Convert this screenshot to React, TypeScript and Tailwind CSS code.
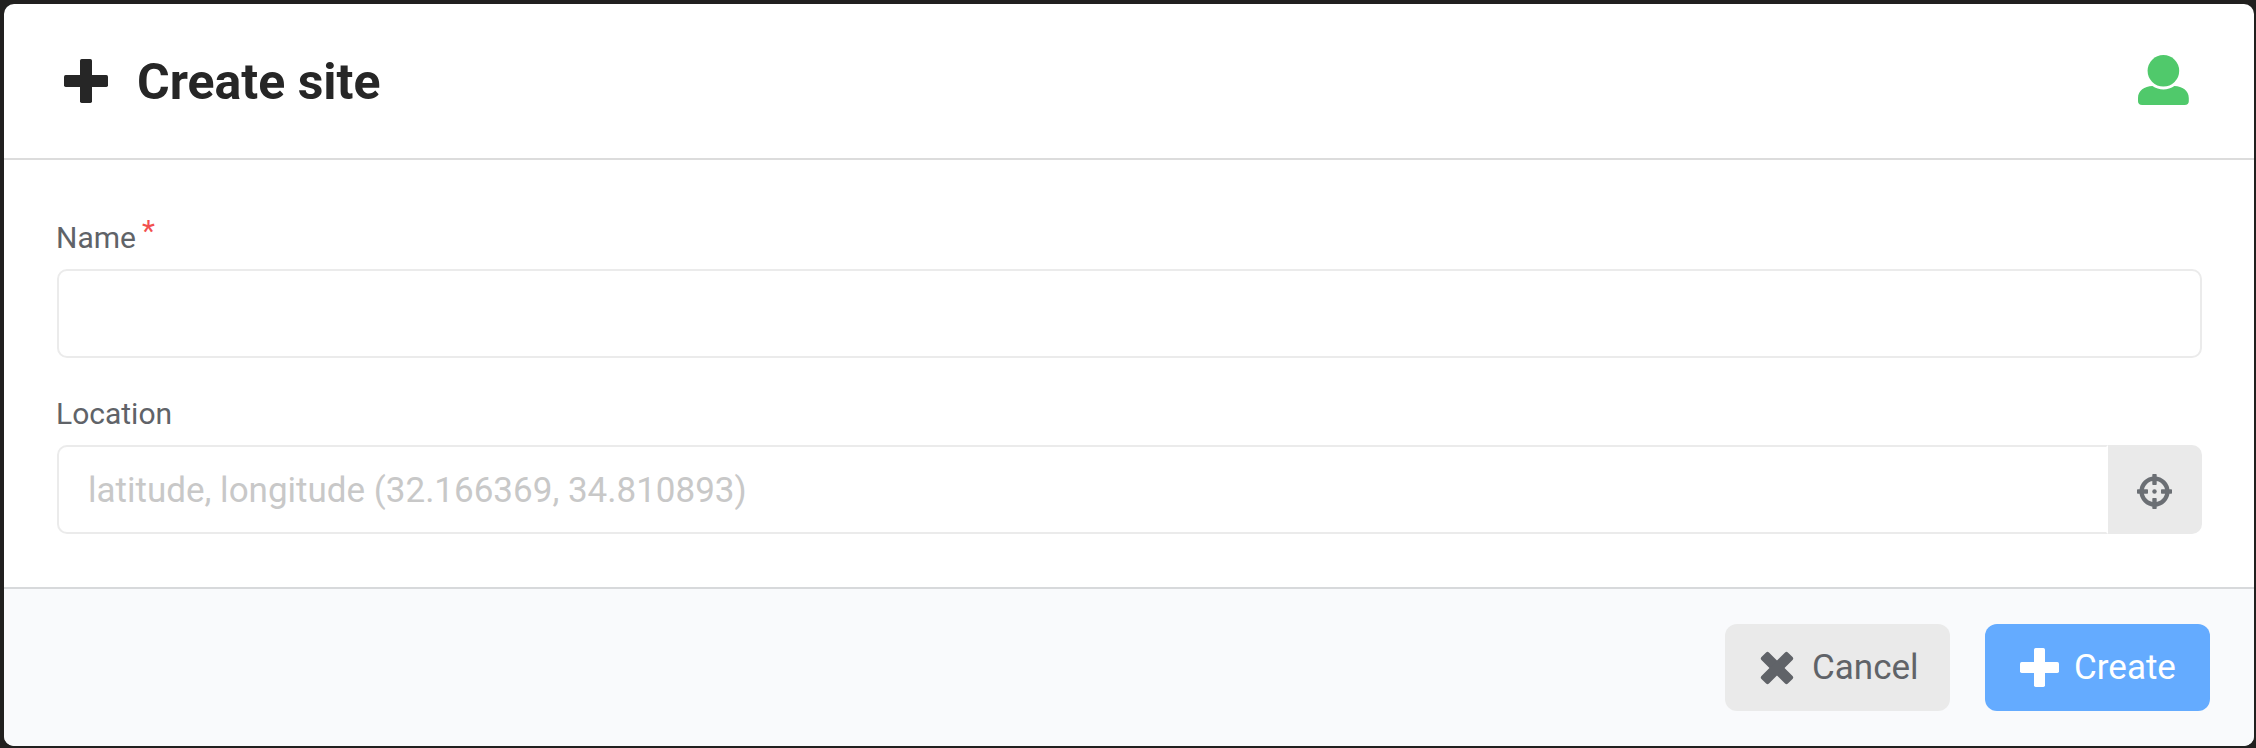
import React from "react";

function PlusIcon({ size, bar, className }: { size: number; bar: number; className?: string }) {
  const start = (size - bar) / 2;
  return (
    <svg width={size} height={size} viewBox={`0 0 ${size} ${size}`} fill="currentColor" className={className} aria-hidden="true">
      <rect x={start} y="0" width={bar} height={size} rx="1.7" />
      <rect x="0" y={start} width={size} height={bar} rx="1.7" />
    </svg>
  );
}

function UserIcon() {
  return (
    <svg width="51" height="52" viewBox="0 0 51 52" className="text-[#50c96b]" fill="currentColor" aria-hidden="true">
      <circle cx="25.4" cy="15.8" r="15.8" />
      <path d="M14.4 31.1C6.5 31.6 0 35.5 0 43v3.3Q0 50 4.2 50h42.4q4.2 0 4.2-3.7V43c0-7.5-6.5-11.4-14.4-11.9C30 35.6 20.8 35.6 14.4 31.1z" />
    </svg>
  );
}

function CrosshairIcon() {
  return (
    <svg width="35" height="35" viewBox="0 0 35 35" fill="currentColor" className="text-[#6b6f74]" aria-hidden="true">
      <circle cx="17.5" cy="17.5" r="12.9" fill="none" stroke="currentColor" strokeWidth="4.3" />
      <circle cx="17.5" cy="17.5" r="2.2" />
      <rect x="15.3" y="0" width="4.4" height="11" rx="0.8" />
      <rect x="15.3" y="24" width="4.4" height="11" rx="0.8" />
      <rect x="0" y="15.3" width="11" height="4.4" rx="0.8" />
      <rect x="24" y="15.3" width="11" height="4.4" rx="0.8" />
    </svg>
  );
}

function CloseIcon() {
  return (
    <svg width="34" height="34" viewBox="0 0 34 34" fill="currentColor" aria-hidden="true">
      <g transform="rotate(45 17 17)">
        <rect x="-1.7" y="11.7" width="37.4" height="10.6" rx="2" />
        <rect x="11.7" y="-1.7" width="10.6" height="37.4" rx="2" />
      </g>
    </svg>
  );
}

export default function App() {
  return (
    <div className="h-[748px] w-[2256px] bg-[#21201f] pt-1 pr-0.5 pb-0.5 pl-1 font-[Roboto,sans-serif]">
      <div className="flex h-full flex-col overflow-hidden rounded-[10px] bg-white">
        <header className="flex h-[156px] shrink-0 items-center border-b-2 border-[#dcdcdc] pr-[65px] pl-[60px] text-[#262626]">
          <PlusIcon size={44} bar={12} />
          <h1 className="ml-[29px] flex-1 pt-0.5 text-[50px] leading-[60px] font-bold">Create site</h1>
          <UserIcon />
        </header>

        <main className="h-[427px] shrink-0 pr-[52px] pl-[53px] text-[#606368]">
          <div className="pt-[58px]">
            <label className="-ml-px flex h-[51px] text-[30px] leading-[40px]">
              Name
              <span className="relative -top-[7px] ml-[6px] text-[#f2504f]">*</span>
            </label>
            <input className="block h-[89px] w-full rounded-[10px] border-2 border-[#ebebeb] bg-white px-[30px] text-[35px] outline-none" />
          </div>
          <div className="pt-[36px]">
            <label className="-ml-px block h-[51px] text-[30px] leading-[40px]">Location</label>
            <div className="flex h-[89px]">
              <input
                className="min-w-0 flex-1 rounded-l-[10px] border-2 border-[#ebebeb] border-r-transparent bg-white pt-[4px] pr-[30px] pl-[29px] text-[35px] outline-none placeholder:text-[#c8c8c8]"
                placeholder="latitude, longitude (32.166369, 34.810893)"
              />
              <button className="flex w-[94px] items-center justify-center rounded-r-[10px] bg-[#eaeaea] pt-1 pr-px" aria-label="Locate">
                <CrosshairIcon />
              </button>
            </div>
          </div>
        </main>

        <footer className="flex flex-1 items-start justify-end gap-[35px] border-t-2 border-[#d7d9db] bg-[#f9fafc] pt-[35px] pr-[44px]">
          <button className="flex h-[87px] w-[225px] items-center rounded-[12px] bg-[#eaeaea] pl-[35px] text-[35px] leading-[40px] text-[#606368]">
            <CloseIcon />
            <span className="ml-[18px]">Cancel</span>
          </button>
          <button className="flex h-[87px] w-[225px] items-center rounded-[12px] bg-[#64abff] pl-[35px] text-[35px] leading-[40px] text-white">
            <PlusIcon size={39} bar={11} />
            <span className="ml-[15px]">Create</span>
          </button>
        </footer>
      </div>
    </div>
  );
}
